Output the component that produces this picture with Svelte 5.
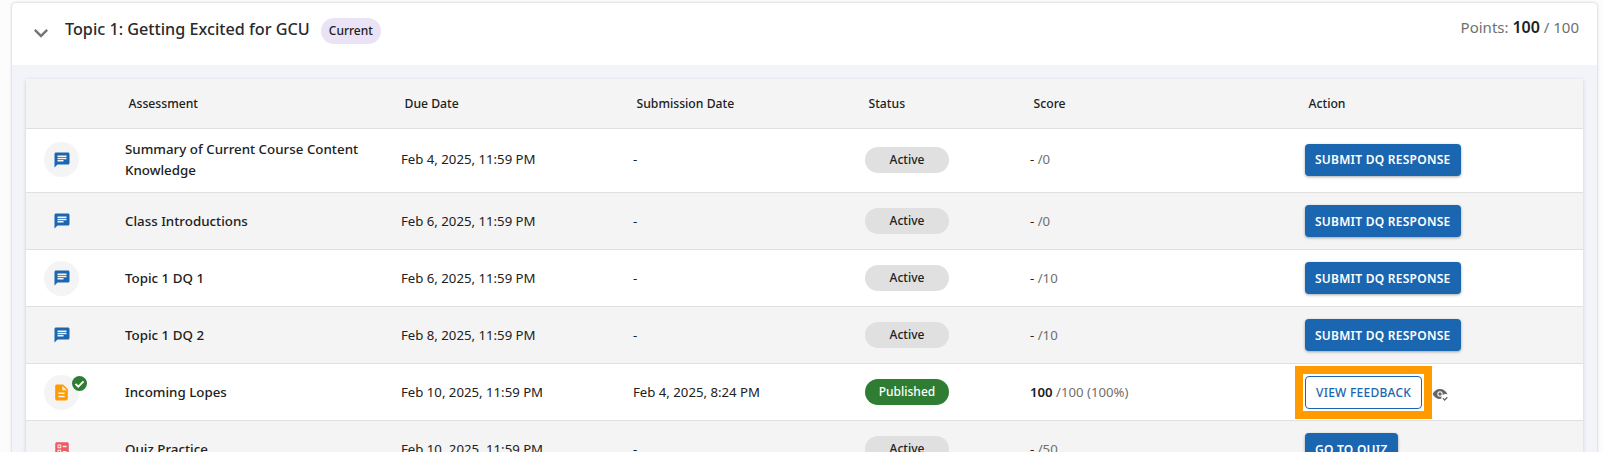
<script>
  const rows = [
    { icon: 'chat', circle: true, title: 'Summary of Current Course Content Knowledge', due: 'Feb 4, 2025, 11:59 PM', submitted: '-', status: 'Active', score: '-', total: '/0', action: 'SUBMIT DQ RESPONSE' },
    { icon: 'chat', circle: false, title: 'Class Introductions', due: 'Feb 6, 2025, 11:59 PM', submitted: '-', status: 'Active', score: '-', total: '/0', action: 'SUBMIT DQ RESPONSE' },
    { icon: 'chat', circle: true, title: 'Topic 1 DQ 1', due: 'Feb 6, 2025, 11:59 PM', submitted: '-', status: 'Active', score: '-', total: '/10', action: 'SUBMIT DQ RESPONSE' },
    { icon: 'chat', circle: false, title: 'Topic 1 DQ 2', due: 'Feb 8, 2025, 11:59 PM', submitted: '-', status: 'Active', score: '-', total: '/10', action: 'SUBMIT DQ RESPONSE' },
    { icon: 'doc', circle: true, done: true, title: 'Incoming Lopes', due: 'Feb 10, 2025, 11:59 PM', submitted: 'Feb 4, 2025, 8:24 PM', status: 'Published', score: '100', total: '/100 (100%)', action: 'VIEW FEEDBACK', outlined: true },
    { icon: 'quiz', circle: false, title: 'Quiz Practice', due: 'Feb 10, 2025, 11:59 PM', submitted: '-', status: 'Active', score: '-', total: '/50', action: 'GO TO QUIZ' }
  ];
</script>

<div class="page">
  <section class="card">
    <header class="topic">
      <svg class="chevron" viewBox="0 0 24 24" width="28" height="28"><path d="M7.41 8.59 12 13.17l4.59-4.58L18 10l-6 6-6-6z" /></svg>
      <h2>Topic 1: Getting Excited for GCU</h2>
      <span class="current">Current</span>
      <div class="points">Points: <b>100</b> / 100</div>
    </header>

    <div class="panel">
      <table>
        <colgroup>
          <col style="width: 95px" />
          <col style="width: 276px" />
          <col style="width: 232px" />
          <col style="width: 232px" />
          <col style="width: 165px" />
          <col style="width: 275px" />
          <col />
        </colgroup>
        <thead>
          <tr>
            <th></th>
            <th>Assessment</th>
            <th>Due Date</th>
            <th>Submission Date</th>
            <th>Status</th>
            <th>Score</th>
            <th>Action</th>
          </tr>
        </thead>
        <tbody>
          {#each rows as row}
            <tr>
              <td>
                <div class="type" class:circle={row.circle}>
                  {#if row.icon === 'chat'}
                    <svg viewBox="0 0 24 24" width="18" height="18" fill="#1b66b1"><path d="M20 2H4c-1.1 0-1.99.9-1.99 2L2 22l4-4h14c1.1 0 2-.9 2-2V4c0-1.1-.9-2-2-2zM6 9h12v2H6V9zm8 5H6v-2h8v2zm4-6H6V6h12v2z" /></svg>
                  {:else if row.icon === 'doc'}
                    <svg viewBox="0 0 24 24" width="19" height="19" fill="#ff9b00"><path d="M14 2H6c-1.1 0-1.99.9-1.99 2L4 20c0 1.1.89 2 1.99 2H18c1.1 0 2-.9 2-2V8l-6-6zm2 16H8v-2h8v2zm0-4H8v-2h8v2zm-3-5V3.5L18.5 9H13z" /></svg>
                  {:else}
                    <svg viewBox="0 0 24 24" width="18" height="18" fill="#f0595f"><path fill-rule="evenodd" d="M5 3h14c1.1 0 2 .9 2 2v14c0 1.1-.9 2-2 2H5c-1.1 0-2-.9-2-2V5c0-1.100.9-2 2-2zm1 3v5h5V6H6zm1.300 1.300h2.400v2.400H7.300V7.300zM13 7.500V9.500h5v-2h-5zM6 13v5h5v-5H6zm1.300 1.300h2.400v2.400H7.300v-2.400zM13 14.500v2h5v-2h-5z" /></svg>
                  {/if}
                  {#if row.done}
                    <svg class="done" viewBox="0 0 24 24" width="15" height="15"><circle cx="12" cy="12" r="12" fill="#2e7d32" /><path d="M5.500 12.500 10 17l8.500-8.500" fill="none" stroke="#fff" stroke-width="3" /></svg>
                  {/if}
                </div>
              </td>
              <td class="title">{row.title}</td>
              <td>{row.due}</td>
              <td>{row.submitted}</td>
              <td><span class="status" class:published={row.status === 'Published'}>{row.status}</span></td>
              <td class="score"><b class:dash={row.score === '-'}>{row.score}</b> {row.total}</td>
              <td>
                <div class="action">
                  <button class:outlined={row.outlined}>{row.action}</button>
                  {#if row.outlined}
                    <svg class="seen" viewBox="0 0 24 24" width="16" height="16" fill="#666"><path d="M12 4.500C7 4.500 2.700 7.600 1 12c1.700 4.400 6 7.500 11 7.500.8 0 1.500-.1 2.200-.2-.1-.4-.2-.9-.2-1.300 0-3.300 2.700-6 6-6 1 0 1.900.2 2.700.7l.3-.7C21.300 7.600 17 4.500 12 4.500zm0 11.500a4 4 0 1 1 0-8 4 4 0 0 1 0 8zm0-6.500a2.500 2.500 0 1 0 0 5 2.500 2.500 0 0 0 0-5z" /><path d="m16.500 18.500 2.500 2.500 4-4" fill="none" stroke="#666" stroke-width="2" /></svg>
                  {/if}
                </div>
              </td>
            </tr>
          {/each}
        </tbody>
      </table>
    </div>
  </section>
</div>

<style>
  :global(body) {
    background: #fcfcfc;
    overflow: hidden;
  }

  .page {
    height: 452px;
    overflow: hidden;
    padding: 3px 6px 0 12px;
    font-family: "Noto Sans", "Open Sans", sans-serif;
    color: #212121;
  }

  .card {
    background: #fff;
    border-radius: 4px 4px 0 0;
    box-shadow: 0 0 3px rgba(0, 0, 0, 0.25);
  }

  .topic {
    height: 62px;
    display: flex;
    align-items: flex-start;
    padding: 0 18px 0 15px;
  }

  .chevron {
    fill: #757575;
    margin-top: 16px;
  }

  h2 {
    margin: 14px 0 0 10px;
    font-size: 16.2px;
    line-height: 25px;
    font-weight: 500;
    color: #2a2a2a;
  }

  .current {
    margin: 15px 0 0 11px;
    padding: 0 8px;
    height: 26px;
    line-height: 26px;
    border-radius: 13px;
    background: #e9e3f5;
    font-size: 12px;
    font-weight: 500;
  }

  .points {
    margin: 14px 0 0 auto;
    font-size: 15px;
    line-height: 20px;
    color: #6f6f6f;
  }

  .points b {
    font-size: 16px;
    font-weight: 600;
    color: #212121;
  }

  .panel {
    background: #f2f4f9;
    padding: 14px 14px 0;
  }

  table {
    width: 100%;
    table-layout: fixed;
    border-collapse: collapse;
    background: #fff;
    box-shadow: 0 1px 4px rgba(0, 0, 0, 0.15);
    font-size: 13.2px;
  }

  th {
    height: 49px;
    padding: 0 0 0 7.5px;
    text-align: left;
    font-size: 12.2px;
    font-weight: 500;
    color: #212121;
    background: #f4f4f4;
    border-bottom: 1px solid #e0e0e0;
  }

  td {
    height: 56px;
    padding: 0 0 0 4px;
    border-bottom: 1px solid #e0e0e0;
    line-height: 21px;
  }

  tbody tr:nth-child(even) td {
    background: #f4f4f4;
  }

  tbody tr:first-child td {
    height: 61px;
    padding-bottom: 2px;
  }

  .title {
    font-size: 13.35px;
    font-weight: 500;
    padding-right: 30px;
  }

  .type {
    position: relative;
    width: 35px;
    height: 35px;
    margin-left: 14px;
    border-radius: 50%;
    display: flex;
    align-items: center;
    justify-content: center;
  }

  .type.circle {
    background: #f4f4f4;
  }

  .done {
    position: absolute;
    top: 1px;
    right: -8px;
  }

  .status {
    display: inline-block;
    box-sizing: border-box;
    width: 84px;
    height: 26px;
    line-height: 26px;
    border-radius: 13px;
    text-align: center;
    font-size: 12px;
    font-weight: 500;
    background: #e0e0e0;
  }

  .status.published {
    background: #2e7d32;
    color: #fff;
  }

  .score {
    color: #6f6f6f;
  }

  .score b {
    font-weight: 600;
    color: #212121;
  }

  .score b.dash {
    font-weight: 400;
  }

  .action {
    display: flex;
    align-items: center;
  }

  button {
    position: relative;
    height: 32px;
    padding: 0 10px;
    border: none;
    border-radius: 4px;
    background: #1b66b1;
    color: #fff;
    font: 600 12px "Noto Sans", "Open Sans", sans-serif;
    letter-spacing: 0.25px;
    box-shadow: 0 1px 3px rgba(0, 0, 0, 0.35);
    white-space: nowrap;
  }

  button.outlined {
    height: 33px;
    background: #fff;
    color: #1b66b1;
    border: 1px solid #1b66b1;
    font-weight: 500;
    box-shadow: none;
  }

  /* highlight box drawn over the screenshot, square corners */
  button.outlined::after {
    content: "";
    position: absolute;
    inset: -11px;
    border: 8px solid #ff9b00;
  }

  .seen {
    margin-left: 10px;
    margin-top: 3px;
  }
</style>
